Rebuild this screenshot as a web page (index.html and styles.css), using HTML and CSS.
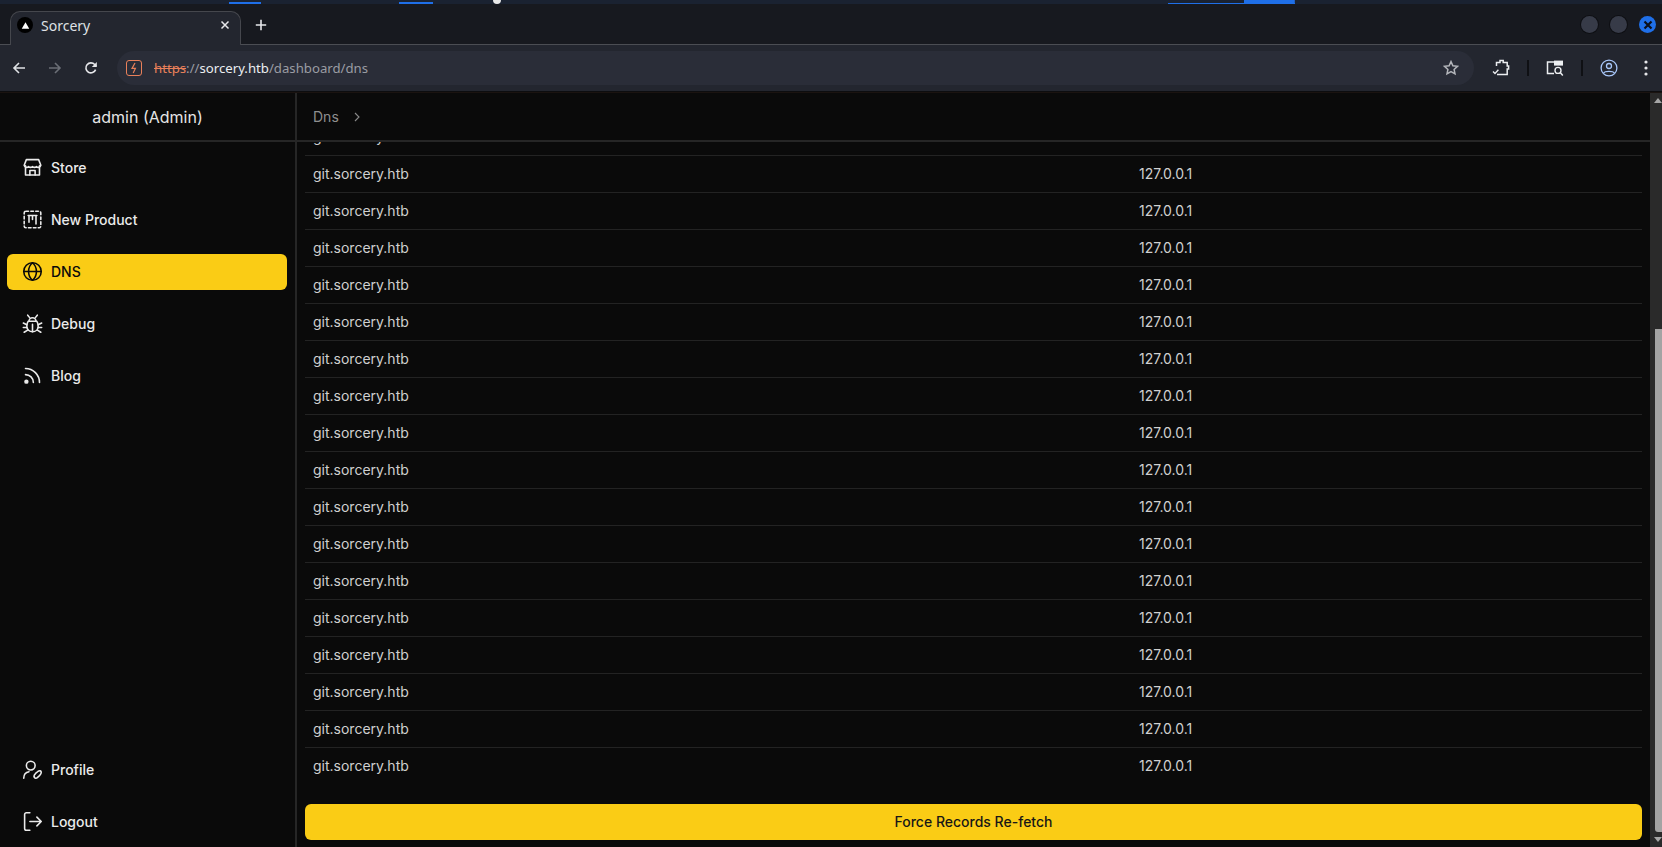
FILE: index.html
```html
<!DOCTYPE html>
<html lang="en">
<head>
<meta charset="utf-8">
<title>Sorcery</title>
<link rel="stylesheet" href="styles.css">
</head>
<body>
<div class="wall">
  <span class="wall-blue wb1"></span>
  <span class="wall-blue wb2"></span>
  <span class="wall-dot"></span>
  <span class="wall-blue wb3"></span>
</div>
<header class="tabstrip">
  <div class="tab">
    <span class="favicon"><svg viewBox="0 0 10 10" width="9" height="9"><path d="M5 1.500 9.200 8.600H.8z" fill="#fff"/></svg></span>
    <span class="tab-title">Sorcery</span>
    <svg class="tab-close" viewBox="0 0 10 10" width="10" height="10"><path d="M1.500 1.500l7 7M8.500 1.500l-7 7" stroke="#e6e7ea" stroke-width="1.500" fill="none"/></svg>
  </div>
  <svg class="tab-new" viewBox="0 0 12 12" width="12" height="12"><path d="M6 .8v10.400M.8 6h10.400" stroke="#e6e7ea" stroke-width="1.600" fill="none"/></svg>
  <div class="winbtns">
    <span class="winbtn"></span><span class="winbtn"></span>
    <span class="winbtn win-close"><svg viewBox="0 0 10 10" width="10" height="10"><path d="M1.500 1.500l7 7M8.500 1.500l-7 7" stroke="#0b0f1a" stroke-width="2.200" fill="none"/></svg></span>
  </div>
</header>
<nav class="toolbar">
  <svg class="tb-back" viewBox="0 0 14 14" width="14" height="14"><path d="M13 7H2M7 2 2 7l5 5" stroke="#dfe1e5" stroke-width="1.600" fill="none"/></svg>
  <svg class="tb-fwd" viewBox="0 0 14 14" width="14" height="14"><path d="M1 7h11M7 2l5 5-5 5" stroke="#6b6e76" stroke-width="1.600" fill="none"/></svg>
  <svg class="tb-reload" viewBox="0 0 14 14" width="14" height="14"><path d="M11.600 8.600A5 5 0 1 1 10.700 3.600L12.200 5" stroke="#e6e7ea" stroke-width="1.600" fill="none"/><path d="M12.800 1v5h-5z" fill="#e6e7ea"/></svg>
  <div class="omnibox">
    <span class="sec-icon"><svg viewBox="0 0 8 12" width="8" height="12"><path d="M5 1 2 6.400h3.400L3.200 11" stroke="#e9805a" stroke-width="1.200" fill="none"/></svg></span>
    <span class="url"><span class="url-https">https</span><span class="url-dim">://</span><span class="url-host">sorcery.htb</span><span class="url-dim">/dashboard/dns</span></span>
    <svg class="star" viewBox="0 0 16 16" width="16" height="16"><path d="M8 1.600l1.900 4.200 4.600.5-3.400 3.100.9 4.500L8 11.700l-4 2.200.9-4.500L1.500 6.300l4.600-.5z" stroke="#b4b6bb" stroke-width="1.500" fill="none"/></svg>
  </div>
  <svg class="tb-ext" viewBox="0 0 18 18" width="18" height="18"><path d="M4.500 7V3.500H8V1.600h3.200v1.900h4V7h1.400v3h-1.400v5.600H5" stroke="#eceef1" stroke-width="1.500" fill="none"/><path d="M1 12.400l2 2 3.400-3.600" stroke="#eceef1" stroke-width="1.400" fill="none"/></svg>
  <span class="tb-sep sep1"></span>
  <svg class="tb-search" viewBox="0 0 18 18" width="18" height="18"><path d="M8 14.600H1.500V3h6.800" stroke="#eceef1" stroke-width="1.500" fill="none"/><path d="M8 1.600h9v5H8z" fill="#eceef1"/><circle cx="12" cy="11.400" r="3" stroke="#eceef1" stroke-width="1.400" fill="none"/><path d="M14.200 13.600l2.600 2.800" stroke="#eceef1" stroke-width="1.500"/></svg>
  <span class="tb-sep sep2"></span>
  <svg class="tb-profile" viewBox="0 0 18 18" width="18" height="18"><circle cx="9" cy="9" r="7.900" stroke="#a8c7fa" stroke-width="1.300" fill="none"/><circle cx="9" cy="7" r="2.500" stroke="#a8c7fa" stroke-width="1.300" fill="none"/><path d="M3.600 14.200C5 11.800 13 11.800 14.400 14.200" stroke="#a8c7fa" stroke-width="1.300" fill="none"/></svg>
  <svg class="tb-dots" viewBox="0 0 4 16" width="4" height="16"><circle cx="2" cy="2" r="1.600" fill="#e6e7ea"/><circle cx="2" cy="8" r="1.600" fill="#e6e7ea"/><circle cx="2" cy="14" r="1.600" fill="#e6e7ea"/></svg>
</nav>
<div class="page">
  <aside class="sidebar">
    <div class="side-head">admin (Admin)</div>
    <div class="side-nav">
      <a class="nav-item"><svg class="ico" viewBox="0 0 24 24"><path d="M4 10v10.500h16V10"/><path d="M5 3h14l2.500 6.500a3 3 0 0 1-5 1.500 3.600 3.600 0 0 1-4.500 0 3.600 3.600 0 0 1-4.500 0 3 3 0 0 1-5-1.500z"/><path d="M9 20.500V15.500h6v5"/></svg>Store</a>
      <a class="nav-item"><svg class="ico" viewBox="0 0 24 24"><rect x="2.500" y="2.500" width="19" height="19" rx="2" stroke-dasharray="3 2.600"/><path d="M8 8v7M12 8v4M16 8v9M7 7.500h10"/></svg>New Product</a>
      <a class="nav-item active"><svg class="ico" viewBox="0 0 24 24"><circle cx="12" cy="12" r="10"/><path d="M2 12h20"/><path d="M12 2c3.500 3 4.500 6.500 4.500 10S15.500 19 12 22c-3.500-3-4.500-6.500-4.500-10S8.500 5 12 2z"/></svg>DNS</a>
      <a class="nav-item"><svg class="ico" viewBox="0 0 24 24"><path d="M7 9.500h10c1 1.500 1.500 3.500 1.500 5.500 0 4-3 6.500-6.500 6.500S5.500 19 5.500 15c0-2 .5-4 1.500-5.500z"/><path d="M8 9.500a4 4 0 0 1 8 0M12 13v8.500M8.500 5 6.500 2.500M15.500 5l2-2.500M5.500 13.500 1.500 11.500M18.500 13.500l4-2M5.500 16.500h-4M18.500 16.500h4M6.500 19.500 2.500 22M17.500 19.500l4 2.500"/></svg>Debug</a>
      <a class="nav-item"><svg class="ico" viewBox="0 0 24 24"><path d="M4 11a9 9 0 0 1 9 9"/><path d="M4 4a16 16 0 0 1 16 16"/><circle cx="5" cy="19" r="1.600" fill="currentColor"/></svg>Blog</a>
      <div class="nav-spacer"></div>
      <a class="nav-item"><svg class="ico" viewBox="0 0 24 24"><circle cx="10" cy="7.500" r="5"/><path d="M2 22c0-4.500 2.800-7 6-7.500"/><path d="M14.500 21.500c-1.500-1.500-.5-3.500 1-5l3-2.500c1.500-1 3.500-.5 3.500 1s-.5 2.500-2 4l-2.500 2.200c-1 .8-2.500 1-3 .3z"/></svg>Profile</a>
      <a class="nav-item"><svg class="ico" viewBox="0 0 24 24"><path d="M9 2H5a2 2 0 0 0-2 2v16a2 2 0 0 0 2 2h4"/><path d="M9 12h13M17 7l5 5-5 5"/></svg>Logout</a>
    </div>
  </aside>
  <main class="main">
    <div class="crumbs"><span>Dns</span><svg class="chev" viewBox="0 0 6 10" width="6" height="10"><path d="M1 1l4 4-4 4" stroke="#8a8a8a" stroke-width="1.100" fill="none"/></svg></div>
    <div class="content">
      <div class="rows">
        <div class="row"><span>git.sorcery.htb</span><span>127.0.0.1</span></div>
        <div class="row"><span>git.sorcery.htb</span><span>127.0.0.1</span></div>
        <div class="row"><span>git.sorcery.htb</span><span>127.0.0.1</span></div>
        <div class="row"><span>git.sorcery.htb</span><span>127.0.0.1</span></div>
        <div class="row"><span>git.sorcery.htb</span><span>127.0.0.1</span></div>
        <div class="row"><span>git.sorcery.htb</span><span>127.0.0.1</span></div>
        <div class="row"><span>git.sorcery.htb</span><span>127.0.0.1</span></div>
        <div class="row"><span>git.sorcery.htb</span><span>127.0.0.1</span></div>
        <div class="row"><span>git.sorcery.htb</span><span>127.0.0.1</span></div>
        <div class="row"><span>git.sorcery.htb</span><span>127.0.0.1</span></div>
        <div class="row"><span>git.sorcery.htb</span><span>127.0.0.1</span></div>
        <div class="row"><span>git.sorcery.htb</span><span>127.0.0.1</span></div>
        <div class="row"><span>git.sorcery.htb</span><span>127.0.0.1</span></div>
        <div class="row"><span>git.sorcery.htb</span><span>127.0.0.1</span></div>
        <div class="row"><span>git.sorcery.htb</span><span>127.0.0.1</span></div>
        <div class="row"><span>git.sorcery.htb</span><span>127.0.0.1</span></div>
        <div class="row"><span>git.sorcery.htb</span><span>127.0.0.1</span></div>
        <div class="row"><span>git.sorcery.htb</span><span>127.0.0.1</span></div>
      </div>
      <button class="refetch">Force Records Re-fetch</button>
    </div>
  </main>
  <div class="scrollbar">
    <span class="arrow-up"></span>
    <span class="thumb"></span>
    <span class="arrow-down"></span>
  </div>
</div>
</body>
</html>
```
FILE: styles.css
```css
* { box-sizing: border-box; }
html, body { margin: 0; height: 100%; overflow: hidden; }
body {
  width: 1662px;
  height: 847px;
  display: flex;
  flex-direction: column;
  background: #0a0a0a;
  font-family: Inter, "Liberation Sans", sans-serif;
}

/* wallpaper sliver above the browser window */
.wall { height: 4px; flex: none; display: flex; align-items: flex-end; background: #1a2231; }
.wall-blue { display: block; height: 2px; background: #1f6fe8; }
.wb1 { width: 32px; margin-left: 229px; }
.wb2 { width: 34px; margin-left: 138px; }
.wb3 {
  width: 127px;
  height: 4px;
  margin-left: 667px;
  background: linear-gradient(#1f6fe8, #1f6fe8) right / 40% 100% no-repeat,
              linear-gradient(#1f6fe8, #1f6fe8) bottom / 100% 1px no-repeat;
}
.wall-dot { display: block; width: 8px; height: 4px; margin-left: 60px; background: #e8e8e8; border-radius: 0 0 4px 4px; }

/* tab strip */
.tabstrip {
  height: 41px;
  flex: none;
  display: flex;
  align-items: flex-end;
  background: #17191f;
  border-bottom: 1px solid #4b4d53;
}
.tab {
  width: 231px;
  height: 34px;
  margin: 0 0 -1px 10px;
  display: flex;
  align-items: center;
  padding: 0 10px 7px 6px;
  background: #23262f;
  border: 1px solid #45474d;
  border-bottom: 0;
  border-radius: 10px 10px 0 0;
}
.favicon {
  width: 16px;
  height: 16px;
  border-radius: 50%;
  background: #000;
  display: flex;
  align-items: center;
  justify-content: center;
  margin-right: 8px;
}
.tab-title {
  flex: 1;
  color: #dfe1e5;
  font: 14px "Noto Sans", "Open Sans", sans-serif;
}
.tab-new { margin: 0 0 13px 14px; }
.winbtns {
  margin: 0 6px 11px auto;
  display: flex;
  gap: 12px;
}
.winbtn {
  width: 17px;
  height: 17px;
  border-radius: 50%;
  background: #373b48;
  box-shadow: 0 0 0 1px #0e0f13;
  display: flex;
  align-items: center;
  justify-content: center;
}
.win-close { background: #1f6fe8; box-shadow: none; }

/* toolbar */
.toolbar {
  height: 47px;
  flex: none;
  display: flex;
  align-items: center;
  background: #23262f;
  border-bottom: 1px solid #0d0d0f;
}
.tb-back { margin-left: 12px; }
.tb-fwd { margin-left: 22px; }
.tb-reload { margin-left: 22px; }
.omnibox {
  width: 1357px;
  height: 34px;
  margin-left: 19px;
  display: flex;
  align-items: center;
  padding: 0 15px 0 9px;
  border-radius: 17px;
  background: #2a2d38;
}
.sec-icon {
  width: 16px;
  height: 16px;
  border: 1.5px solid #e9805a;
  border-radius: 3px;
  display: flex;
  align-items: center;
  justify-content: center;
  margin-right: 12px;
}
.url { flex: 1; font: 13.2px "Noto Sans", "Open Sans", sans-serif; }
.url-https { color: #e9805a; text-decoration: line-through; }
.url-dim { color: #9a9ca3; }
.url-host { color: #eceef1; }
.tb-ext { margin-left: 18px; }
.tb-sep { width: 2px; height: 16px; background: #0f1014; }
.sep1 { margin-left: 17px; }
.tb-search { margin-left: 17px; }
.sep2 { margin-left: 17px; }
.tb-profile { margin-left: 17px; }
.tb-dots { margin-left: 26px; }

/* page */
.page { flex: 1; min-height: 0; display: flex; border-top: 1px solid #1a1310; }
.sidebar {
  width: 297px;
  flex: none;
  display: flex;
  flex-direction: column;
  border-right: 2px solid #262626;
}
.side-head {
  height: 49px;
  flex: none;
  display: flex;
  align-items: center;
  justify-content: center;
  color: #e5e5e5;
  font-size: 16px;
  border-bottom: 2px solid #262626;
}
.side-nav {
  flex: 1;
  display: flex;
  flex-direction: column;
  gap: 16px;
  padding: 8px 8px 7px 7px;
}
.nav-spacer { flex: 1; }
.nav-item {
  height: 36px;
  flex: none;
  display: flex;
  align-items: center;
  gap: 8px;
  padding: 0 0 2px 15px;
  border-radius: 6px;
  color: #ebebeb;
  font-size: 14px;
  font-weight: 500;
}
.nav-item.active { background: #facc15; color: #0a0a0a; }
.ico {
  width: 21px;
  height: 21px;
  flex: none;
  fill: none;
  stroke: currentColor;
  stroke-width: 1.8;
  stroke-linecap: round;
  stroke-linejoin: round;
}

.main { flex: 1; min-width: 0; display: flex; flex-direction: column; }
.crumbs {
  height: 49px;
  flex: none;
  display: flex;
  align-items: center;
  gap: 15px;
  padding-left: 16px;
  color: #8f8f8f;
  font-size: 14px;
  border-bottom: 2px solid #262626;
}
.content {
  flex: 1;
  min-height: 0;
  display: flex;
  flex-direction: column;
  padding: 0 8px 7px;
  gap: 20px;
}
.rows {
  flex: 1;
  min-height: 0;
  overflow: hidden;
  display: flex;
  flex-direction: column;
  justify-content: flex-end;
}
.row {
  height: 37px;
  flex: none;
  display: grid;
  grid-template-columns: 826px 1fr;
  align-items: center;
  padding: 0 8px 1px;
  border-top: 1px solid #232323;
  color: #d0d0d0;
  font-size: 14px;
}
.refetch {
  height: 36px;
  flex: none;
  border: 0;
  padding: 0 0 2px;
  border-radius: 6px;
  background: #facc15;
  color: #171717;
  font: 500 14px Inter, "Liberation Sans", sans-serif;
}

.scrollbar {
  width: 12px;
  flex: none;
  display: flex;
  flex-direction: column;
  align-items: flex-start;
  background: #2a2a2a;
  padding: 5px 0 5px 4px;
}
.arrow-up, .arrow-down {
  width: 0;
  height: 0;
  border-left: 4px solid transparent;
  border-right: 4px solid transparent;
  flex: none;
}
.arrow-up { border-bottom: 5px solid #a6a6a6; }
.arrow-down { border-top: 5px solid #a6a6a6; }
.thumb {
  width: 7px;
  margin: 226px 0 5px 1px;
  flex: 1;
  background: #a3a3a3;
  border-radius: 0 0 0 3px;
}
```
